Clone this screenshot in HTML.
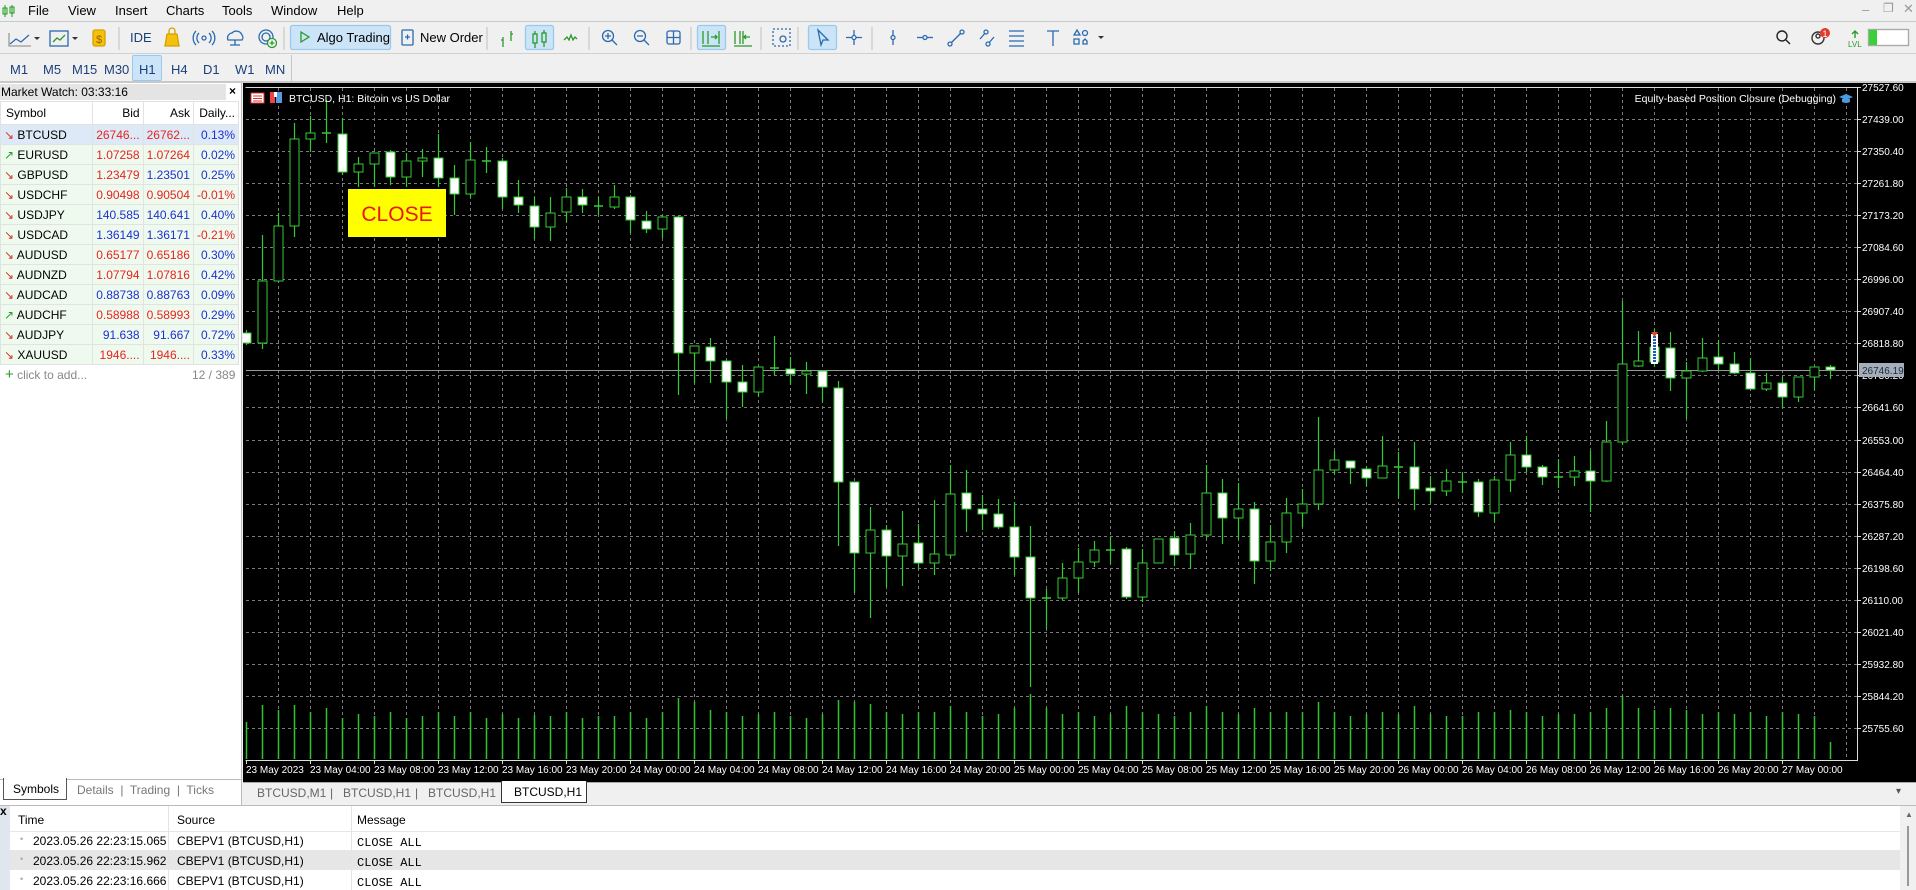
<!DOCTYPE html>
<html><head><meta charset="utf-8">
<style>
*{margin:0;padding:0;box-sizing:border-box}
body{width:1916px;height:890px;overflow:hidden;background:#f0f0f0;font-family:"Liberation Sans",sans-serif;font-size:13px;color:#000;position:relative}
.a{position:absolute;white-space:nowrap}
.menu span{position:absolute;top:3px;font-size:13px}
.tf span{position:absolute;top:62px;font-size:13px;color:#1a3f7a}
.sep{position:absolute;width:1px;background:#c8c8c8}
table{border-collapse:collapse}
.mw td{height:20px;border:1px solid #e2e2e2;font-size:12px;padding:0 3px}
.mw td.n{text-align:right}
.r{color:#e8231f}.bl{color:#1f2fcf}
.up{color:#2a9a2a}.dn{color:#d9332a}
.log span{position:absolute;font-size:12px}
.mono{font-family:"Liberation Mono",monospace;font-size:11px}
</style></head><body>

<div class="menu a" style="left:0;top:0;width:1916px;height:22px;border-bottom:1px solid #c9c9c9">
<svg class="a" style="left:2px;top:4px" width="14" height="14"><path d="M3 1V13M10 1V13" stroke="#1a9a1a"/><rect x="1" y="4" width="4" height="6" fill="none" stroke="#1a9a1a"/><rect x="8" y="3" width="4" height="6" fill="none" stroke="#1a9a1a"/></svg>
<span style="left:28px">File</span><span style="left:68px">View</span><span style="left:115px">Insert</span><span style="left:166px">Charts</span><span style="left:222px">Tools</span><span style="left:271px">Window</span><span style="left:337px">Help</span>
<span style="left:1862px;top:2px;color:#999">–</span><span style="left:1883px;top:1px;color:#999;font-size:12px">❐</span><span style="left:1903px;top:1px;color:#999">✕</span>
</div>

<div class="a" style="left:0;top:23px;width:1916px;height:30px">
<svg class="a" style="left:0;top:0" width="1120" height="30" fill="none" stroke-width="1.3">
<path d="M10 21l6-5 5 3 8-7" stroke="#2a6ab0"/><path d="M9 10v13h22" stroke="#999"/><path d="M34 14l3 3 3-3z" fill="#333" stroke="none"/>
<rect x="50" y="8" width="18" height="15" stroke="#2a6ab0"/><path d="M53 19l4-4 3 2 5-5" stroke="#2a9a2a"/><path d="M72 14l3 3 3-3z" fill="#333" stroke="none"/>
<rect x="93" y="7" width="12" height="16" rx="2" fill="#f4c20d" stroke="#d8a000"/><text x="96" y="20" font-size="11" fill="#a06000" stroke="none" font-family="Liberation Sans">$</text>
<path d="M119 4v23" stroke="#ccc"/>
<path d="M167 11h10l2 12h-14z" fill="#f4c20d" stroke="#d8a000"/><path d="M169 11v-3a3 3 0 0 1 6 0v3" stroke="#d8a000"/>
<circle cx="204" cy="15" r="2" stroke="#2a6ab0"/><path d="M199 10a7 7 0 0 0 0 10M209 10a7 7 0 0 1 0 10M196 8a10 10 0 0 0 0 14M212 8a10 10 0 0 1 0 14" stroke="#2a6ab0"/>
<path d="M228 17a5 5 0 0 1 4-7 6 6 0 0 1 10 2 4 4 0 0 1 0 5zM235 17v5M230 22h10" stroke="#2a6ab0"/>
<circle cx="266" cy="14" r="7" stroke="#2a6ab0"/><circle cx="266" cy="14" r="4" stroke="#2a6ab0"/><circle cx="272" cy="20" r="4.5" fill="#fff" stroke="#2a9a2a"/><path d="M272 17.5v5M269.5 20h5" stroke="#2a9a2a"/>
<path d="M284 4v23" stroke="#ccc"/>
<rect x="290.5" y="2.5" width="100" height="24" rx="2" fill="#cce4f7" stroke="#99c9ef"/>
<path d="M301 9l8 5-8 5z" stroke="#2a9a2a"/>
<rect x="402" y="7" width="11" height="15" rx="1" stroke="#2a6ab0"/><path d="M405 14h5M407.5 11.5v5" stroke="#2a6ab0"/>
<path d="M487 4v23" stroke="#ccc"/>
<path d="M503 14v10M501 17h2M511 8v10M511 11h2" stroke="#2a9a2a"/>
<rect x="525.5" y="2.5" width="28" height="24" rx="2" fill="#cce4f7" stroke="#99c9ef"/>
<path d="M535 8v17M544 7v17" stroke="#2a9a2a"/><rect x="533" y="11" width="4" height="9" fill="#cce4f7" stroke="#2a9a2a"/><rect x="542" y="10" width="4" height="9" fill="#cce4f7" stroke="#2a9a2a"/>
<path d="M564 17l3-3 2 3 2-5 2 5 2-3 2 2" stroke="#2a9a2a"/>
<path d="M589 4v23" stroke="#ccc"/>
<circle cx="608" cy="13" r="5.5" stroke="#2a6ab0"/><path d="M612 17l5 5M605 13h6M608 10v6" stroke="#2a6ab0"/>
<circle cx="640" cy="13" r="5.5" stroke="#2a6ab0"/><path d="M644 17l5 5M637 13h6" stroke="#2a6ab0"/>
<rect x="667" y="8" width="13" height="13" rx="2" stroke="#2a6ab0"/><path d="M673.5 8v13M667 14.5h13" stroke="#2a6ab0"/>
<path d="M691 4v23" stroke="#ccc"/>
<rect x="697.5" y="2.5" width="28" height="24" rx="2" fill="#cce4f7" stroke="#99c9ef"/>
<path d="M703 8v13M708 8v13M711 14h6M715 12l2 2-2 2M719 8v13M702 23h18" stroke="#2a9a2a"/>
<path d="M735 8v13M740 8v13M744 14h6M746 12l-2 2 2 2M743 8v13M734 23h18" stroke="#2a9a2a"/>
<path d="M761 4v23" stroke="#ccc"/>
<rect x="773" y="6" width="17" height="17" stroke="#2a6ab0" stroke-dasharray="2 2"/><circle cx="783" cy="16" r="3" stroke="#2a6ab0"/>
<path d="M798 4v23" stroke="#ccc"/>
<rect x="808.5" y="2.5" width="28" height="24" rx="2" fill="#cce4f7" stroke="#99c9ef"/>
<path d="M818 7l10 10-5 0-2 5z" stroke="#2a6ab0"/>
<path d="M854 7v15M846 14.5h16" stroke="#2a6ab0"/><circle cx="854" cy="14.5" r="2" fill="#fff" stroke="#2a6ab0"/>
<path d="M872 4v23" stroke="#ccc"/>
<path d="M893 7v15" stroke="#2a6ab0"/><circle cx="893" cy="14.5" r="2" fill="#f0f0f0" stroke="#2a6ab0"/>
<path d="M917 14.5h16" stroke="#2a6ab0"/><circle cx="925" cy="14.5" r="2" fill="#f0f0f0" stroke="#2a6ab0"/>
<path d="M950 21l12-12" stroke="#2a6ab0"/><circle cx="950" cy="21" r="2" fill="#f0f0f0" stroke="#2a6ab0"/><circle cx="962" cy="9" r="2" fill="#f0f0f0" stroke="#2a6ab0"/>
<path d="M980 16l6-7M988 21l6-7" stroke="#2a6ab0"/><circle cx="986" cy="9" r="2" fill="#f0f0f0" stroke="#2a6ab0"/><circle cx="988" cy="21" r="2" fill="#f0f0f0" stroke="#2a6ab0"/>
<path d="M1009 8h15M1009 13h15M1009 18h15M1009 23h15" stroke="#2a6ab0"/>
<path d="M1047 8h12M1053 8v15" stroke="#2a6ab0"/>
<path d="M1077 7l3 5h-6zM1074 16h5v5h-5z" stroke="#2a6ab0"/><circle cx="1085" cy="10" r="2.5" stroke="#2a6ab0"/><path d="M1083 18l2-2 2 2v3h-4z" stroke="#2a6ab0"/><path d="M1098 13l3 3 3-3z" fill="#333" stroke="none"/>
</svg>
<span class="a" style="left:130px;top:7px;color:#1a3f7a">IDE</span>
<span class="a" style="left:317px;top:7px">Algo Trading</span>
<span class="a" style="left:420px;top:7px">New Order</span>
<svg class="a" style="left:1775px;top:4px" width="141" height="24" fill="none" stroke-width="1.4">
<circle cx="7" cy="9" r="5" stroke="#222"/><path d="M11 13l4 4" stroke="#222"/>
<circle cx="43" cy="11" r="6" stroke="#333"/><circle cx="43" cy="9" r="2" stroke="#333"/><circle cx="50" cy="6" r="5" fill="#e53a2a" stroke="none"/>
<text x="47.5" y="10" font-size="9" fill="#fff" stroke="none" font-family="Liberation Sans">1</text>
<path d="M77 7l3-3 3 3M80 4v7" stroke="#2a9a2a"/><text x="73" y="20" font-size="8" fill="#2a9a2a" stroke="none" font-family="Liberation Sans">LVL</text>
<rect x="93.5" y="2.5" width="40" height="16" fill="#fff" stroke="#aaa"/><rect x="94" y="3" width="8" height="15" fill="#3ad03a" stroke="none"/>
</svg>
</div>
<div class="a" style="left:0;top:53px;width:1916px;height:1px;background:#d0d0d0"></div>

<div class="tf">
<div class="a" style="left:132px;top:55px;width:30px;height:26px;background:#cce4f7;border:1px solid #99c9ef;border-radius:2px"></div>
<span style="left:10px">M1</span><span style="left:43px">M5</span><span style="left:72px">M15</span><span style="left:104px">M30</span><span style="left:139px">H1</span><span style="left:171px">H4</span><span style="left:203px">D1</span><span style="left:235px">W1</span><span style="left:265px">MN</span>
</div>
<div class="sep" style="left:291px;top:55px;height:26px"></div>
<div class="a" style="left:0;top:81px;width:1916px;height:2px;background:#c8c8c8"></div>

<div class="a" style="left:0;top:83px;width:242px;height:722px;background:#fff;border-right:1px solid #bbb"></div>
<div class="a" style="left:0;top:84px;width:226px;height:16px;background:#e4e4e4;font-size:12px;padding-left:1px;line-height:16px">Market Watch: 03:33:16</div>
<div class="a" style="left:229px;top:84px;font-size:12px;font-weight:bold">×</div>
<table class="a mw" style="left:0;top:101px;width:239px">
<tr style="height:23px"><td style="width:94px;padding-left:5px">Symbol</td><td class="n" style="width:48px">Bid</td><td class="n" style="width:47px">Ask</td><td class="n">Daily...</td></tr>
<tr style="background:#dde9f7"><td><span class="dn">↘</span> BTCUSD</td><td class="n r">26746...</td><td class="n r">26762...</td><td class="n bl">0.13%</td></tr>
<tr style="background:#effaef"><td><span class="up">↗</span> EURUSD</td><td class="n r">1.07258</td><td class="n r">1.07264</td><td class="n bl">0.02%</td></tr>
<tr style="background:#effaef"><td><span class="dn">↘</span> GBPUSD</td><td class="n r">1.23479</td><td class="n bl">1.23501</td><td class="n bl">0.25%</td></tr>
<tr style="background:#effaef"><td><span class="dn">↘</span> USDCHF</td><td class="n r">0.90498</td><td class="n r">0.90504</td><td class="n r">-0.01%</td></tr>
<tr style="background:#effaef"><td><span class="dn">↘</span> USDJPY</td><td class="n bl">140.585</td><td class="n bl">140.641</td><td class="n bl">0.40%</td></tr>
<tr style="background:#effaef"><td><span class="dn">↘</span> USDCAD</td><td class="n bl">1.36149</td><td class="n bl">1.36171</td><td class="n r">-0.21%</td></tr>
<tr style="background:#effaef"><td><span class="dn">↘</span> AUDUSD</td><td class="n r">0.65177</td><td class="n r">0.65186</td><td class="n bl">0.30%</td></tr>
<tr style="background:#effaef"><td><span class="dn">↘</span> AUDNZD</td><td class="n r">1.07794</td><td class="n r">1.07816</td><td class="n bl">0.42%</td></tr>
<tr style="background:#effaef"><td><span class="dn">↘</span> AUDCAD</td><td class="n bl">0.88738</td><td class="n bl">0.88763</td><td class="n bl">0.09%</td></tr>
<tr style="background:#effaef"><td><span class="up">↗</span> AUDCHF</td><td class="n r">0.58988</td><td class="n r">0.58993</td><td class="n bl">0.29%</td></tr>
<tr style="background:#effaef"><td><span class="dn">↘</span> AUDJPY</td><td class="n bl">91.638</td><td class="n bl">91.667</td><td class="n bl">0.72%</td></tr>
<tr style="background:#effaef"><td><span class="dn">↘</span> XAUUSD</td><td class="n r">1946....</td><td class="n r">1946....</td><td class="n bl">0.33%</td></tr>
</table>
<div class="a" style="left:5px;top:366px;font-size:12px;color:#888"><span style="color:#2a9a2a;font-size:15px">+</span> click to add...</div>
<div class="a" style="left:192px;top:368px;font-size:12px;color:#888">12 / 389</div>
<div class="a" style="left:0;top:779px;width:242px;height:1px;background:#bbb"></div>
<div class="a" style="left:3px;top:778px;width:64px;height:22px;background:#fff;border:1px solid #555;border-top:none;font-size:12px;padding:4px 0 0 9px">Symbols</div>
<div class="a" style="left:77px;top:783px;font-size:12px;color:#777">Details &nbsp;|&nbsp; Trading &nbsp;|&nbsp; Ticks</div>

<svg class="a" style="left:243px;top:83px" width="1673" height="699" viewBox="243 83 1673 699">
<rect x="243" y="83" width="1673" height="699" fill="#000"/>
<path d="M245.5 87.5H1857.5V760.5H245.5" fill="none" stroke="#ddd"/>
<g stroke="#7a7a7a" stroke-dasharray="3 3" fill="none">
<path d="M246 119.5H1857M246 151.5H1857M246 183.5H1857M246 215.5H1857M246 247.5H1857M246 279.5H1857M246 311.5H1857M246 343.5H1857M246 375.5H1857M246 407.5H1857M246 440.5H1857M246 472.5H1857M246 504.5H1857M246 536.5H1857M246 568.5H1857M246 600.5H1857M246 632.5H1857M246 664.5H1857M246 696.5H1857M246 728.5H1857"/>
<path d="M278.5 88V760M310.5 88V760M342.5 88V760M374.5 88V760M406.5 88V760M438.5 88V760M470.5 88V760M502.5 88V760M534.5 88V760M566.5 88V760M598.5 88V760M630.5 88V760M662.5 88V760M694.5 88V760M726.5 88V760M758.5 88V760M790.5 88V760M822.5 88V760M854.5 88V760M886.5 88V760M918.5 88V760M950.5 88V760M982.5 88V760M1014.5 88V760M1046.5 88V760M1078.5 88V760M1110.5 88V760M1142.5 88V760M1174.5 88V760M1206.5 88V760M1238.5 88V760M1270.5 88V760M1302.5 88V760M1334.5 88V760M1366.5 88V760M1398.5 88V760M1430.5 88V760M1462.5 88V760M1494.5 88V760M1526.5 88V760M1558.5 88V760M1590.5 88V760M1622.5 88V760M1654.5 88V760M1686.5 88V760M1718.5 88V760M1750.5 88V760M1782.5 88V760M1814.5 88V760M1846.5 88V760"/>
</g>
<path d="M246 370.5H1857" stroke="#999"/>
<path stroke="#2fc42f" stroke-width="1.5" d="M246.5 759V722M262.5 759V705M278.5 759V710M294.5 759V705M310.5 759V712M326.5 759V708M342.5 759V718M358.5 759V714M374.5 759V716M390.5 759V712M406.5 759V718M422.5 759V716M438.5 759V712M454.5 759V716M470.5 759V712M486.5 759V718M502.5 759V714M518.5 759V718M534.5 759V715M550.5 759V716M566.5 759V712M582.5 759V718M598.5 759V716M614.5 759V716M630.5 759V712M646.5 759V718M662.5 759V712M678.5 759V698M694.5 759V702M710.5 759V710M726.5 759V712M742.5 759V716M758.5 759V714M774.5 759V712M790.5 759V716M806.5 759V718M822.5 759V714M838.5 759V700M854.5 759V702M870.5 759V704M886.5 759V712M902.5 759V714M918.5 759V712M934.5 759V712M950.5 759V706M966.5 759V712M982.5 759V716M998.5 759V714M1014.5 759V708M1030.5 759V694M1046.5 759V708M1062.5 759V714M1078.5 759V712M1094.5 759V716M1110.5 759V714M1126.5 759V706M1142.5 759V712M1158.5 759V714M1174.5 759V716M1190.5 759V712M1206.5 759V706M1222.5 759V712M1238.5 759V714M1254.5 759V708M1270.5 759V712M1286.5 759V712M1302.5 759V712M1318.5 759V702M1334.5 759V712M1350.5 759V716M1366.5 759V714M1382.5 759V712M1398.5 759V714M1414.5 759V706M1430.5 759V714M1446.5 759V716M1462.5 759V716M1478.5 759V712M1494.5 759V712M1510.5 759V710M1526.5 759V712M1542.5 759V716M1558.5 759V714M1574.5 759V714M1590.5 759V712M1606.5 759V708M1622.5 759V696M1638.5 759V708M1654.5 759V710M1670.5 759V708M1686.5 759V710M1702.5 759V714M1718.5 759V712M1734.5 759V714M1750.5 759V712M1766.5 759V716M1782.5 759V712M1798.5 759V714M1814.5 759V716M1830.5 759V742"/>
<path stroke="#32cd32" stroke-width="1.2" d="M246.5 330V345M262.5 235V349M278.5 213V281M294.5 123V237M310.5 116V152M326.5 100V143M342.5 118V175M358.5 157V187M374.5 153V187M390.5 150V185M406.5 153V187M422.5 149V177M438.5 134V187M454.5 165V215M470.5 142V198M486.5 147V173M502.5 158V209M518.5 180V213M534.5 197V239M550.5 197V241M566.5 188V222M582.5 189V213M598.5 197V215M614.5 185V209M630.5 195V233M646.5 211V233M662.5 215V238M678.5 215V395M694.5 346V383M710.5 338V383M726.5 361V419M742.5 365V407M758.5 367V397M774.5 336V375M790.5 357V385M806.5 362V394M822.5 371V402M838.5 381V546M854.5 482V593M870.5 507V618M886.5 525V587M902.5 511V586M918.5 524V569M934.5 500V575M950.5 465V558M966.5 470V532M982.5 495V530M998.5 499V529M1014.5 502V575M1030.5 526V687M1046.5 589V629M1062.5 563V600M1078.5 548V593M1094.5 541V567M1110.5 537V564M1126.5 547V599M1142.5 549V602M1158.5 539V563M1174.5 531V566M1190.5 523V569M1206.5 465V538M1222.5 479V544M1238.5 483V539M1254.5 502V584M1270.5 525V571M1286.5 498V553M1302.5 489V527M1318.5 417V510M1334.5 451V474M1350.5 461V484M1366.5 466V486M1382.5 436V478M1398.5 452V498M1414.5 442V510M1430.5 476V503M1446.5 469V496M1462.5 472V493M1478.5 479V517M1494.5 476V522M1510.5 442V492M1526.5 436V472M1542.5 465V485M1558.5 459V488M1574.5 456V486M1590.5 451V512M1606.5 421V482M1622.5 301V445M1638.5 331V367M1654.5 329V367M1670.5 332V391M1686.5 362V419M1702.5 338V372M1718.5 340V371M1734.5 352V374M1750.5 358V389M1766.5 373V391M1782.5 377V408M1798.5 377V402M1814.5 367V390M1830.5 365V379"/>
<path stroke="#32cd32" stroke-width="1.5" d="M322 133H331M482 161H491M594 206H603M770 368H779M1042 598H1051M1106 550H1115M1394 467H1403M1458 482H1467M1554 477H1563"/>
<g fill="#fff" stroke="#32cd32">
<rect x="242" y="333" width="9" height="10"/><rect x="338" y="134" width="9" height="38"/><rect x="386" y="152" width="9" height="25"/><rect x="434" y="158" width="9" height="20"/><rect x="450" y="178" width="9" height="16"/><rect x="498" y="161" width="9" height="36"/><rect x="514" y="197" width="9" height="8"/><rect x="530" y="206" width="9" height="21"/><rect x="578" y="197" width="9" height="8"/><rect x="626" y="197" width="9" height="23"/><rect x="642" y="221" width="9" height="8"/><rect x="674" y="217" width="9" height="136"/><rect x="706" y="347" width="9" height="14"/><rect x="722" y="361" width="9" height="21"/><rect x="738" y="382" width="9" height="10"/><rect x="786" y="369" width="9" height="5"/><rect x="818" y="371" width="9" height="16"/><rect x="834" y="388" width="9" height="94"/><rect x="850" y="482" width="9" height="71"/><rect x="882" y="530" width="9" height="26"/><rect x="914" y="543" width="9" height="20"/><rect x="962" y="493" width="9" height="16"/><rect x="978" y="509" width="9" height="5"/><rect x="994" y="514" width="9" height="13"/><rect x="1010" y="527" width="9" height="30"/><rect x="1026" y="557" width="9" height="41"/><rect x="1122" y="549" width="9" height="48"/><rect x="1170" y="538" width="9" height="17"/><rect x="1218" y="493" width="9" height="25"/><rect x="1250" y="509" width="9" height="52"/><rect x="1346" y="461" width="9" height="7"/><rect x="1362" y="469" width="9" height="9"/><rect x="1410" y="467" width="9" height="22"/><rect x="1426" y="488" width="9" height="3"/><rect x="1474" y="482" width="9" height="30"/><rect x="1522" y="455" width="9" height="12"/><rect x="1538" y="467" width="9" height="10"/><rect x="1586" y="471" width="9" height="10"/><rect x="1650" y="347" width="9" height="15"/><rect x="1666" y="348" width="9" height="30"/><rect x="1714" y="357" width="9" height="7"/><rect x="1730" y="364" width="9" height="9"/><rect x="1746" y="373" width="9" height="16"/><rect x="1778" y="383" width="9" height="14"/><rect x="1826" y="367" width="9" height="3"/>
</g>
<g fill="#000" stroke="#32cd32">
<rect x="258" y="281" width="9" height="62"/><rect x="274" y="226" width="9" height="55"/><rect x="290" y="139" width="9" height="87"/><rect x="306" y="133" width="9" height="6"/><rect x="354" y="164" width="9" height="8"/><rect x="370" y="153" width="9" height="11"/><rect x="402" y="161" width="9" height="16"/><rect x="418" y="158" width="9" height="3"/><rect x="466" y="160" width="9" height="34"/><rect x="546" y="213" width="9" height="14"/><rect x="562" y="197" width="9" height="15"/><rect x="610" y="197" width="9" height="10"/><rect x="658" y="217" width="9" height="12"/><rect x="690" y="346" width="9" height="7"/><rect x="754" y="367" width="9" height="25"/><rect x="802" y="371" width="9" height="3"/><rect x="866" y="530" width="9" height="23"/><rect x="898" y="544" width="9" height="12"/><rect x="930" y="554" width="9" height="9"/><rect x="946" y="494" width="9" height="61"/><rect x="1058" y="578" width="9" height="20"/><rect x="1074" y="562" width="9" height="16"/><rect x="1090" y="550" width="9" height="12"/><rect x="1138" y="563" width="9" height="34"/><rect x="1154" y="539" width="9" height="24"/><rect x="1186" y="535" width="9" height="19"/><rect x="1202" y="493" width="9" height="42"/><rect x="1234" y="509" width="9" height="9"/><rect x="1266" y="542" width="9" height="19"/><rect x="1282" y="513" width="9" height="29"/><rect x="1298" y="504" width="9" height="9"/><rect x="1314" y="470" width="9" height="34"/><rect x="1330" y="460" width="9" height="10"/><rect x="1378" y="466" width="9" height="12"/><rect x="1442" y="481" width="9" height="10"/><rect x="1490" y="480" width="9" height="33"/><rect x="1506" y="455" width="9" height="25"/><rect x="1570" y="471" width="9" height="6"/><rect x="1602" y="442" width="9" height="39"/><rect x="1618" y="364" width="9" height="78"/><rect x="1634" y="361" width="9" height="5"/><rect x="1682" y="371" width="9" height="7"/><rect x="1698" y="358" width="9" height="13"/><rect x="1762" y="383" width="9" height="6"/><rect x="1794" y="377" width="9" height="20"/><rect x="1810" y="367" width="9" height="10"/>
</g>
<rect x="1651" y="334" width="7" height="30" fill="#fff"/><path d="M1654.5 336V362" stroke="#1a5fb0" stroke-width="3" stroke-dasharray="2 1"/><path d="M1651 332h7l-3.5 5z" fill="#d84a2a"/>
<path stroke="#ddd" d="M1857 87.5h4M1857 119.5h4M1857 151.5h4M1857 183.5h4M1857 215.5h4M1857 247.5h4M1857 279.5h4M1857 311.5h4M1857 343.5h4M1857 375.5h4M1857 407.5h4M1857 440.5h4M1857 472.5h4M1857 504.5h4M1857 536.5h4M1857 568.5h4M1857 600.5h4M1857 632.5h4M1857 664.5h4M1857 696.5h4M1857 728.5h4"/>
<g fill="#fff" font-family="Liberation Sans" font-size="10">
<text x="1862" y="91">27527.60</text><text x="1862" y="123">27439.00</text><text x="1862" y="155">27350.40</text><text x="1862" y="187">27261.80</text><text x="1862" y="219">27173.20</text><text x="1862" y="251">27084.60</text><text x="1862" y="283">26996.00</text><text x="1862" y="315">26907.40</text><text x="1862" y="347">26818.80</text><text x="1862" y="379">26730.20</text><text x="1862" y="411">26641.60</text><text x="1862" y="444">26553.00</text><text x="1862" y="476">26464.40</text><text x="1862" y="508">26375.80</text><text x="1862" y="540">26287.20</text><text x="1862" y="572">26198.60</text><text x="1862" y="604">26110.00</text><text x="1862" y="636">26021.40</text><text x="1862" y="668">25932.80</text><text x="1862" y="700">25844.20</text><text x="1862" y="732">25755.60</text>
</g>
<rect x="1859" y="363" width="45" height="14" fill="#a4adb8"/><text x="1862" y="374" font-family="Liberation Sans" font-size="10" fill="#1a2a44">26746.19</text>
<path stroke="#ddd" d="M246.5 760v4M310.5 760v4M374.5 760v4M438.5 760v4M502.5 760v4M566.5 760v4M630.5 760v4M694.5 760v4M758.5 760v4M822.5 760v4M886.5 760v4M950.5 760v4M1014.5 760v4M1078.5 760v4M1142.5 760v4M1206.5 760v4M1270.5 760v4M1334.5 760v4M1398.5 760v4M1462.5 760v4M1526.5 760v4M1590.5 760v4M1654.5 760v4M1718.5 760v4M1782.5 760v4"/>
<g fill="#fff" font-family="Liberation Sans" font-size="10">
<text x="246" y="773">23 May 2023</text><text x="310" y="773">23 May 04:00</text><text x="374" y="773">23 May 08:00</text><text x="438" y="773">23 May 12:00</text><text x="502" y="773">23 May 16:00</text><text x="566" y="773">23 May 20:00</text><text x="630" y="773">24 May 00:00</text><text x="694" y="773">24 May 04:00</text><text x="758" y="773">24 May 08:00</text><text x="822" y="773">24 May 12:00</text><text x="886" y="773">24 May 16:00</text><text x="950" y="773">24 May 20:00</text><text x="1014" y="773">25 May 00:00</text><text x="1078" y="773">25 May 04:00</text><text x="1142" y="773">25 May 08:00</text><text x="1206" y="773">25 May 12:00</text><text x="1270" y="773">25 May 16:00</text><text x="1334" y="773">25 May 20:00</text><text x="1398" y="773">26 May 00:00</text><text x="1462" y="773">26 May 04:00</text><text x="1526" y="773">26 May 08:00</text><text x="1590" y="773">26 May 12:00</text><text x="1654" y="773">26 May 16:00</text><text x="1718" y="773">26 May 20:00</text><text x="1782" y="773">27 May 00:00</text>
</g>
<rect x="251" y="93" width="13" height="10" fill="#fff" stroke="#d33"/><path d="M253 96h9M253 98.5h9M253 101h9" stroke="#d33"/>
<rect x="270" y="92" width="5" height="11" fill="#e44"/><rect x="276" y="92" width="6" height="11" fill="#5a9ae0"/><rect x="274" y="92" width="3" height="5" fill="#fff"/>
<text x="289" y="102" fill="#fff" font-family="Liberation Sans" font-size="10.5">BTCUSD, H1:  Bitcoin vs US Dollar</text>
<text x="1836" y="102" fill="#fff" font-family="Liberation Sans" font-size="10.5" text-anchor="end">Equity-based Position Closure (Debugging)</text>
<path d="M1839 97l7-3 7 3-7 3z" fill="#4a9ae0"/><path d="M1842 99v3q4 2 8 0v-3" fill="#4a9ae0"/>
<rect x="348" y="189" width="98" height="48" fill="#ffff00"/>
<text x="397" y="221" fill="#e8180c" font-family="Liberation Sans" font-size="21" text-anchor="middle">CLOSE</text>
</svg>

<div class="a" style="left:243px;top:782px;width:1673px;height:22px;background:#f0f0f0;border-top:1px solid #aaa"></div>
<div class="a" style="left:257px;top:786px;font-size:12px;color:#666">BTCUSD,M1</div>
<div class="a" style="left:330px;top:786px;font-size:12px;color:#666">|</div>
<div class="a" style="left:343px;top:786px;font-size:12px;color:#666">BTCUSD,H1</div>
<div class="a" style="left:415px;top:786px;font-size:12px;color:#666">|</div>
<div class="a" style="left:428px;top:786px;font-size:12px;color:#666">BTCUSD,H1</div>
<div class="a" style="left:501px;top:781px;width:86px;height:22px;background:#fff;border:1px solid #333;border-top:none;font-size:12px;padding:4px 0 0 12px">BTCUSD,H1</div>
<div class="a" style="left:1896px;top:786px;font-size:10px;color:#555">▾</div>

<div class="a" style="left:0;top:805px;width:1916px;height:85px;background:#fff;border-top:1px solid #bbb"></div>
<div class="a" style="left:0;top:806px;width:10px;height:84px;background:#dfe6ee"></div>
<div class="a" style="left:0;top:804px;font-size:12px;font-weight:bold">x</div>
<div class="a" style="left:10px;top:850px;width:1890px;height:20px;background:#e6e6e6"></div>
<div class="sep" style="left:168px;top:806px;height:84px;background:#e4e4e4"></div>
<div class="sep" style="left:351px;top:806px;height:84px;background:#e4e4e4"></div>
<div class="a" style="left:10px;top:831px;width:1890px;height:1px;background:#e6e6e6"></div>
<div class="a" style="left:1900px;top:806px;width:16px;height:84px;background:#f0f0f0"></div>
<div class="a" style="left:1905px;top:810px;font-size:8px;color:#666">▲</div>
<div class="a" style="left:1907px;top:826px;width:2px;height:60px;background:#999"></div>
<div class="log">
<span style="left:18px;top:813px">Time</span><span style="left:177px;top:813px">Source</span><span style="left:357px;top:813px">Message</span>
<span style="left:20px;top:834px;color:#aaa;font-size:9px">•</span><span style="left:33px;top:834px">2023.05.26 22:23:15.065</span><span style="left:177px;top:834px">CBEPV1 (BTCUSD,H1)</span><span class="mono" style="left:357px;top:836px">CLOSE ALL</span>
<span style="left:20px;top:854px;color:#aaa;font-size:9px">•</span><span style="left:33px;top:854px">2023.05.26 22:23:15.962</span><span style="left:177px;top:854px">CBEPV1 (BTCUSD,H1)</span><span class="mono" style="left:357px;top:856px">CLOSE ALL</span>
<span style="left:20px;top:874px;color:#aaa;font-size:9px">•</span><span style="left:33px;top:874px">2023.05.26 22:23:16.666</span><span style="left:177px;top:874px">CBEPV1 (BTCUSD,H1)</span><span class="mono" style="left:357px;top:876px">CLOSE ALL</span>
</div>
</body></html>
